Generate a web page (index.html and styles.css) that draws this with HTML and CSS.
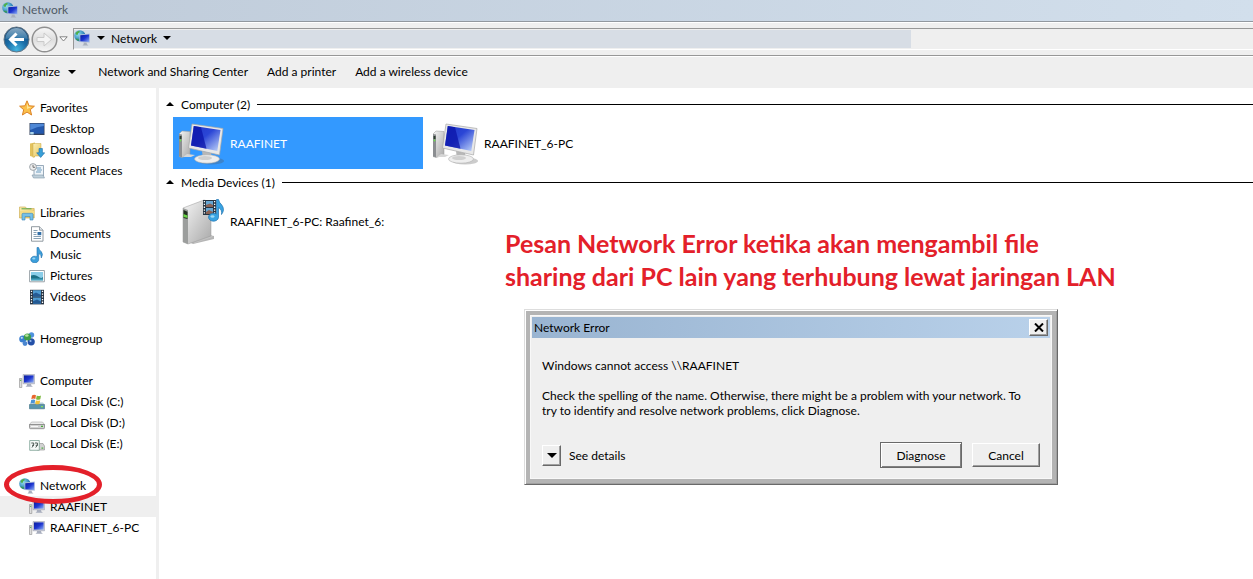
FILE: index.html
```
<!DOCTYPE html>
<html lang="en">
<head>
  <meta charset="utf-8">
  <title>Network</title>
  <link rel="stylesheet" href="styles.css">
</head>
<body>
  <!-- shared icons -->
  <svg class="defs" width="0" height="0">
    <defs>
      <linearGradient id="screen" x1="0" y1="0" x2="1" y2="1">
        <stop offset="0" stop-color="#0a1e9c"/><stop offset=".5" stop-color="#1d35d0"/><stop offset="1" stop-color="#8fb0f4"/>
      </linearGradient>
      <linearGradient id="screenBig" x1="0" y1="0" x2="1" y2="1">
        <stop offset="0" stop-color="#2036c8"/><stop offset=".45" stop-color="#2b46d6"/><stop offset="1" stop-color="#c4d8fa"/>
      </linearGradient>
      <linearGradient id="metal" x1="0" y1="0" x2="1" y2="1">
        <stop offset="0" stop-color="#f6f6f6"/><stop offset=".5" stop-color="#cfcfcf"/><stop offset="1" stop-color="#a9a9a9"/>
      </linearGradient>
      <radialGradient id="globe" cx=".35" cy=".35" r=".7">
        <stop offset="0" stop-color="#8fe0f0"/><stop offset="1" stop-color="#1467a8"/>
      </radialGradient>
      <linearGradient id="folder" x1="0" y1="0" x2="1" y2="1">
        <stop offset="0" stop-color="#fbeeb0"/><stop offset="1" stop-color="#e5c45e"/>
      </linearGradient>
      <radialGradient id="backFill" cx=".5" cy=".9" r=".8">
        <stop offset="0" stop-color="#45b5e0"/><stop offset=".5" stop-color="#1a6ea8"/><stop offset="1" stop-color="#174a78"/>
      </radialGradient>
      <linearGradient id="gloss" x1="0" y1="0" x2="0" y2="1">
        <stop offset="0" stop-color="#c4dbea"/><stop offset="1" stop-color="#4787b3"/>
      </linearGradient>
      <linearGradient id="fwdFill" x1="0" y1="0" x2="0" y2="1">
        <stop offset="0" stop-color="#f8f8f8"/><stop offset=".5" stop-color="#dedede"/><stop offset="1" stop-color="#f6f6f6"/>
      </linearGradient>
    </defs>

    <symbol id="i-network" viewBox="0 0 16 16">
      <circle cx="5.8" cy="5.800" r="5.600" fill="url(#globe)"/>
      <path d="M1.500 3Q3 1 5 .8L6 2 4.200 3.200 3.500 5 2 4.500z" fill="#4fae4a"/>
      <path d="M2 8.500l2.500.5.5 1.800Q3 11 1.500 9z" fill="#3c9c52"/>
      <path d="M5.500 4.500L15.800 3.600V12.800L5.500 12z" fill="#b6c3da"/>
      <path d="M6.300 5.200L15.200 4.400V12L6.300 11.200z" fill="url(#screen)"/>
      <path d="M9.500 12.500h3l.5 1.700 1.500 1.200H8.500L9.800 14z" fill="#a8afbd"/>
    </symbol>
    <symbol id="i-pc" viewBox="0 0 16 16">
      <path d="M.5 5.500h2.300v9H.5z" fill="#dedede" stroke="#8c8c8c" stroke-width=".6"/>
      <path d="M1.200 6.800h1v1.200h-1z" fill="#49aa3c"/>
      <path d="M4 1.500h11.600v9.300H4z" fill="#c7cbd6" stroke="#989daf" stroke-width=".5"/>
      <path d="M5 2.400h9.600v7.200H5z" fill="url(#screen)"/>
      <path d="M8 11h4l.5 1.800 1.500 1H6.500l1.200-1z" fill="#a7adbd"/>
    </symbol>
    <symbol id="i-star" viewBox="0 0 16 16">
      <path d="M8 .8l2.100 5 5.300.4-4.100 3.500 1.300 5.300L8 12.100 3.400 15l1.300-5.300L.6 6.200l5.300-.4z" fill="#fbc04a" stroke="#dd8428" stroke-width="1" stroke-linejoin="round"/>
      <path d="M8 3l1.300 3.700 3.400.3L8 9z" fill="#fee69a"/>
    </symbol>
    <symbol id="i-desktop" viewBox="0 0 16 16">
      <path d="M.5 2h15v12H.5z" fill="#35435c"/>
      <path d="M1.200 2.700h13.600v10H1.200z" fill="#2459ae"/>
      <path d="M1.200 2.700h13.600V5Q8 5.500 1.200 9z" fill="#4f88d6"/>
      <path d="M1.200 11h3.500v2.500H1.200z" fill="#a9d2e8"/>
    </symbol>
    <symbol id="i-downloads" viewBox="0 0 16 16">
      <path d="M1 1.500l5-1v15l-5-1.500z" fill="#e2c25d"/>
      <path d="M4 1.500h8v12.500H6L4 15.500z" fill="url(#folder)" stroke="#c9a645" stroke-width=".5"/>
      <path d="M10 6.500h3.400v4.300h2.300l-4 4.700-4-4.700H10z" fill="#38a0d8" stroke="#1b6da8" stroke-width=".6"/>
    </symbol>
    <symbol id="i-recent" viewBox="0 0 16 16">
      <path d="M5 2.500h9.500V13H5z" fill="#eef4f9" stroke="#8197a9" stroke-width=".8"/>
      <path d="M7 5h5M8 7h5M7 9h5" stroke="#6c9cbe"/>
      <path d="M3 12h11l1.500 3H4.500z" fill="#bfd0db" stroke="#8197a9" stroke-width=".6"/>
      <circle cx="4" cy="4" r="3.400" fill="#eee" stroke="#8b949a" stroke-width=".8"/>
      <path d="M4 2v2.300h2" fill="none" stroke="#555" stroke-width=".8"/>
    </symbol>
    <symbol id="i-libraries" viewBox="0 0 16 16">
      <path d="M.5 2h6l1 1.500h7.700V13H.5z" fill="url(#folder)" stroke="#c9a645" stroke-width=".6"/>
      <path d="M2.500 3.800h10" stroke="#58a550" stroke-width="1"/>
      <path d="M1 6h14.500v3H1z" fill="#f5dd85"/>
      <path d="M3 15V9.500Q3 8.300 4.200 8.300h8.600q1.200 0 1.200 1.200V15h-3v-3.500H6V15z" fill="#74c0e8" stroke="#3a84b5" stroke-width=".6"/>
    </symbol>
    <symbol id="i-documents" viewBox="0 0 16 16">
      <path d="M2.500.7h8l3.500 3.500v11H2.500z" fill="#fff" stroke="#868e96" stroke-width=".9"/>
      <path d="M10.500.7v3.500H14" fill="#dfe5ea" stroke="#868e96" stroke-width=".8"/>
      <path d="M4.500 4.500h4M4.500 6.500h3M4.500 8.500h3M4.500 10.500h7.500M4.500 12.500h7.500" stroke="#7b96ac" stroke-width=".9"/>
      <path d="M8.500 6h3.800v3.200H8.500z" fill="#316ea7"/>
    </symbol>
    <symbol id="i-music" viewBox="0 0 16 16">
      <path d="M8 .5h1.600Q10 3 12.300 4.700 14.500 7 12.300 11q.4-3.600-2.600-4.400v5.600A4 3.300 0 1 1 8 9.800z" fill="#3b9fdb" stroke="#1c6dab" stroke-width=".6"/>
      <ellipse cx="4.800" cy="11.500" rx="1.600" ry="1" fill="#9bd4f2"/>
    </symbol>
    <symbol id="i-pictures" viewBox="0 0 16 16">
      <path d="M.6 2.500h14.800v11.300H.6z" fill="#fff" stroke="#8f989f" stroke-width=".9"/>
      <path d="M2 4h12v8.300H2z" fill="#8acde8"/>
      <path d="M2 7.500Q6 6 9 8.500T14 9v3.300H2z" fill="#1c6f85"/>
      <path d="M2 10.500h12v1.800H2z" fill="#45a0bd"/>
    </symbol>
    <symbol id="i-videos" viewBox="0 0 16 16">
      <path d="M1 .8h14v14.600H1z" fill="#273443"/>
      <path d="M4 1.300h8v6.300H4zM4 8.500h8v6.300H4z" fill="#4d9ad1"/>
      <path d="M4 5l3-1.500L12 6v1.600H4zM4 12.200l4-1.700 4 2v2.300H4z" fill="#245a94"/>
      <path d="M2.500 1.800v13M13.500 1.800v13" stroke="#fff" stroke-width="1.300" stroke-dasharray="1.300 1.400"/>
    </symbol>
    <symbol id="i-homegroup" viewBox="0 0 16 16">
      <circle cx="3.800" cy="8" r="3.600" fill="#3a7fd0"/>
      <circle cx="12.200" cy="10.800" r="3.600" fill="#2450a8"/>
      <circle cx="12.500" cy="4" r="2.700" fill="#4f92dd"/>
      <circle cx="6" cy="12.600" r="2.400" fill="#4a86d0"/>
      <circle cx="8.500" cy="6" r="3.600" fill="#3f9e48"/>
      <ellipse cx="7.800" cy="4.500" rx="1.800" ry="1.300" fill="#b9e39d"/>
      <circle cx="2.800" cy="6.800" r="1.100" fill="#b7ddf5"/>
      <circle cx="11.500" cy="10" r="1.100" fill="#94baea"/>
    </symbol>
    <symbol id="i-disk" viewBox="0 0 16 16">
      <path d="M2.500 7h11l2 2.500H.5z" fill="#ececec" stroke="#999" stroke-width=".5"/>
      <path d="M.5 9.500h15v3.200q0 1-1 1h-13q-1 0-1-1z" fill="#d2d2d2" stroke="#777" stroke-width=".7"/>
      <path d="M2 11.500h7" stroke="#f7f7f7"/>
      <path d="M12 10.800h2v1.300h-2z" fill="#49aa3c"/>
    </symbol>
    <symbol id="i-disk-win" viewBox="0 0 16 16">
      <path d="M2 8.500h12l1.500 2H.5z" fill="#b8cfda"/>
      <path d="M.5 10.500h15v4.300H.5z" fill="#5794ad" stroke="#3d6e83" stroke-width=".6"/>
      <path d="M12 12h2v1.300h-2z" fill="#8be05a"/>
      <path d="M3 1.500Q5 0 7 1.200L6.300 5Q4.500 4 2.300 5.200z" fill="#e8662e"/>
      <path d="M7.800 1.500Q10 2.600 12 1.400L11.300 5.200Q9 6.200 7 5.200z" fill="#7dba3f"/>
      <path d="M2.200 6Q4.400 4.800 6.200 6L5.500 9.600Q3.500 8.500 1.500 9.600z" fill="#4a93d6"/>
      <path d="M6.900 6.200Q9 7.300 11.200 6.200L10.500 9.800Q8.300 10.800 6.200 9.800z" fill="#f3c237"/>
    </symbol>
    <symbol id="i-disk-share" viewBox="0 0 16 16">
      <path d="M8 7.500h6l1.500 2.500v4H8z" fill="#d2d2d2" stroke="#8b8b8b" stroke-width=".6"/>
      <path d="M.7 4.500h9.600v9.800H.7z" fill="#f6faf8" stroke="#7ba093" stroke-width=".8"/>
      <path d="M2.300 7h2.400v2L3 11.500M6 7h2.400v2L6.700 11.500M3 9.300h2M6.700 9.300h2" fill="none" stroke="#4c5a55" stroke-width="1"/>
      <path d="M12.500 11.500h1.800v1.200h-1.800z" fill="#49aa3c"/>
    </symbol>
    <symbol id="i-pc-big" viewBox="0 0 48 48">
      <ellipse cx="32" cy="42" rx="13" ry="3.500" fill="#555" opacity=".3"/>
      <path d="M0 15l3-3 8 .5V36l-8 2.500-3-1z" fill="url(#metal)" stroke="#999" stroke-width=".5"/>
      <path d="M0 15l3 .5V38.300L0 37.500z" fill="#8b8e91"/>
      <path d="M.6 17h1.900v3H.6z" fill="#2d3c2f"/>
      <circle cx="1.500" cy="21.500" r=".9" fill="#69df4c"/>
      <path d="M8 35l8 1-4 2H4z" fill="#d6d6d6"/>
      <path d="M23 32l9 2 1 6h-9z" fill="#b7b7b7"/>
      <ellipse cx="28" cy="40" rx="12.500" ry="4.200" fill="#eee" stroke="#adadad" stroke-width=".6"/>
      <ellipse cx="26" cy="39" rx="7" ry="2" fill="#cfcfcf"/>
      <path d="M13 5L44 9.500 40.500 36 9.500 29z" fill="#e8e8e8" stroke="#a8a8a8" stroke-width=".7"/>
      <path d="M14.800 7L41.500 11 38.300 32 12 26.500z" fill="url(#screenBig)"/>
      <path d="M14.800 7L22 8.200 27.500 29.800 12 26.500z" fill="#0b14a8" opacity=".75"/>
    </symbol>
    <symbol id="i-media" viewBox="0 0 48 48">
      <path d="M10 45l20-7 5 1v3L14 47z" fill="#6c6c6c" opacity=".5"/>
      <path d="M12 44l20-6 2 2-18 6z" fill="#c2c2c2"/>
      <path d="M4 11L25 3l7 2v34L9 47l-5-2z" fill="url(#metal)" stroke="#999" stroke-width=".5"/>
      <path d="M4 11l5 2v34l-5-2z" fill="#9c9e9d"/>
      <path d="M4.500 13l4 1.700V22l-4-1z" fill="#21301f"/>
      <path d="M4.500 17l4 1.500v2.500l-4-1z" fill="#6ad447"/>
      <path d="M24 3h13v15H24z" fill="#263442"/>
      <path d="M27 4h7v6h-7zM27 11h7v6h-7z" fill="#67a7d3"/>
      <path d="M27 8l4-1.500 3 1.500v2h-7zM27 15l3-2 4 2v2h-7z" fill="#8a6254"/>
      <path d="M25.400 4v13M35.600 4v13" stroke="#fff" stroke-width="1.300" stroke-dasharray="1.300 1.500"/>
      <path d="M37.500 2.500h2q.5 3 3.300 5.500 3.500 4.500-.3 9.500.8-5-3-7v10A5 4 0 1 1 37.500 17z" fill="#38a3e2" stroke="#1f72af" stroke-width=".7"/>
      <ellipse cx="33.500" cy="19.500" rx="2" ry="1.200" fill="#9ddaf6"/>
    </symbol>
    <symbol id="i-down" viewBox="0 0 8 4">
      <path d="M0 0h8L4 4z" fill="currentColor"/>
    </symbol>
    <symbol id="i-up" viewBox="0 0 8 4">
      <path d="M0 4h8L4 0z" fill="currentColor"/>
    </symbol>
  </svg>

  <div class="window">
    <header class="titlebar">
      <svg class="icon"><use href="#i-network"/></svg>
      <span>Network</span>
    </header>

    <div class="navbar">
      <div class="nav-buttons">
        <button class="nav-btn" aria-label="Back">
          <svg width="27" height="27" viewBox="0 0 27 27">
            <circle cx="13.500" cy="13.500" r="12.500" fill="url(#backFill)" stroke="#637584"/>
            <path d="M2.500 13A11 11 0 0 1 24.500 13Q13 10 2.500 13z" fill="url(#gloss)" opacity=".65"/>
            <path d="M21 13.500H8M13.500 7.500l-6 6 6 6" fill="none" stroke="#fff" stroke-width="3"/>
          </svg>
        </button>
        <button class="nav-btn" aria-label="Forward">
          <svg width="27" height="27" viewBox="0 0 27 27">
            <circle cx="13.500" cy="13.500" r="12.300" fill="url(#fwdFill)" stroke="#909090" stroke-width="1.500"/>
            <path d="M6 11.500h7V7l7.500 6.500L13 20v-4.500H6z" fill="#f4f4f4" stroke="#cacaca"/>
          </svg>
        </button>
        <button class="nav-btn history" aria-label="Recent pages">
          <svg width="9" height="6" viewBox="0 0 9 6"><path d="M.8.8h7.400L4.500 5z" fill="#fff" stroke="#777" stroke-width=".9"/></svg>
        </button>
      </div>
      <div class="address">
        <div class="address-path">
          <svg class="icon"><use href="#i-network"/></svg>
          <svg class="arrow"><use href="#i-down"/></svg>
          <a href="#">Network</a>
          <svg class="arrow"><use href="#i-down"/></svg>
        </div>
      </div>
    </div>

    <div class="toolbar">
      <button class="menu">Organize <svg class="arrow"><use href="#i-down"/></svg></button>
      <button>Network and Sharing Center</button>
      <button>Add a printer</button>
      <button>Add a wireless device</button>
    </div>

    <div class="body">
      <nav class="sidebar">
        <ul>
          <li><a href="#"><svg class="icon"><use href="#i-star"/></svg>Favorites</a></li>
          <li class="sub"><a href="#"><svg class="icon"><use href="#i-desktop"/></svg>Desktop</a></li>
          <li class="sub"><a href="#"><svg class="icon"><use href="#i-downloads"/></svg>Downloads</a></li>
          <li class="sub"><a href="#"><svg class="icon"><use href="#i-recent"/></svg>Recent Places</a></li>
        </ul>
        <ul>
          <li><a href="#"><svg class="icon"><use href="#i-libraries"/></svg>Libraries</a></li>
          <li class="sub"><a href="#"><svg class="icon"><use href="#i-documents"/></svg>Documents</a></li>
          <li class="sub"><a href="#"><svg class="icon"><use href="#i-music"/></svg>Music</a></li>
          <li class="sub"><a href="#"><svg class="icon"><use href="#i-pictures"/></svg>Pictures</a></li>
          <li class="sub"><a href="#"><svg class="icon"><use href="#i-videos"/></svg>Videos</a></li>
        </ul>
        <ul>
          <li><a href="#"><svg class="icon"><use href="#i-homegroup"/></svg>Homegroup</a></li>
        </ul>
        <ul>
          <li><a href="#"><svg class="icon"><use href="#i-pc"/></svg>Computer</a></li>
          <li class="sub"><a href="#"><svg class="icon"><use href="#i-disk-win"/></svg>Local Disk (C:)</a></li>
          <li class="sub"><a href="#"><svg class="icon"><use href="#i-disk"/></svg>Local Disk (D:)</a></li>
          <li class="sub"><a href="#"><svg class="icon"><use href="#i-disk-share"/></svg>Local Disk (E:)</a></li>
        </ul>
        <ul>
          <li class="marked">
            <a href="#"><svg class="icon"><use href="#i-network"/></svg>Network</a>
            <span class="ring"></span>
          </li>
          <li class="sub current"><a href="#"><svg class="icon"><use href="#i-pc"/></svg>RAAFINET</a></li>
          <li class="sub"><a href="#"><svg class="icon"><use href="#i-pc"/></svg>RAAFINET_6-PC</a></li>
        </ul>
      </nav>

      <main class="content">
        <section>
          <h2 class="group"><svg class="arrow"><use href="#i-up"/></svg>Computer (2)</h2>
          <div class="items">
            <a href="#" class="item selected"><svg class="big"><use href="#i-pc-big"/></svg>RAAFINET</a>
            <a href="#" class="item"><svg class="big"><use href="#i-pc-big"/></svg>RAAFINET_6-PC</a>
          </div>
        </section>
        <section>
          <h2 class="group"><svg class="arrow"><use href="#i-up"/></svg>Media Devices (1)</h2>
          <div class="items">
            <a href="#" class="item"><svg class="big"><use href="#i-media"/></svg>RAAFINET_6-PC: Raafinet_6:</a>
          </div>
        </section>
      </main>
    </div>

    <p class="note">Pesan Network Error ketika akan mengambil file<br>sharing dari PC lain yang terhubung lewat jaringan LAN</p>

    <div class="dialog" role="dialog" aria-labelledby="dialogTitle">
      <div class="dialog-inner">
        <div class="dialog-title">
          <span id="dialogTitle">Network Error</span>
          <button class="btn close" aria-label="Close">
            <svg width="10" height="9" viewBox="0 0 10 9"><path d="M1 .5l8 8M9 .5l-8 8" stroke="#000" stroke-width="2"/></svg>
          </button>
        </div>
        <div class="dialog-body">
          <p>Windows cannot access \\RAAFINET</p>
          <p>Check the spelling of the name. Otherwise, there might be a problem with your network. To<br>try to identify and resolve network problems, click Diagnose.</p>
          <div class="dialog-actions">
            <button class="btn details" id="details" aria-label="See details"><svg class="arrow"><use href="#i-down"/></svg></button>
            <label for="details">See details</label>
            <button class="btn default">Diagnose</button>
            <button class="btn cancel">Cancel</button>
          </div>
        </div>
      </div>
    </div>
  </div>
</body>
</html>
```
FILE: styles.css
```
* {
  box-sizing: border-box;
}
body {
  margin: 0;
  font-family: Lato, "Open Sans", sans-serif;
  font-size: 12px;
  color: #000;
  background-color: #fff;
}
a {
  color: inherit;
  text-decoration: none;
}
button {
  font: inherit;
  color: inherit;
  padding: 0;
  border: none;
  background: none;
}
svg {
  display: block;
  flex: none;
}
.defs {
  position: absolute;
}
.icon {
  width: 16px;
  height: 16px;
}
.arrow {
  width: 8px;
  height: 4px;
}
.window {
  position: relative;
  display: flex;
  flex-direction: column;
  min-height: 100vh;
}

/* title and address bars */
.titlebar {
  display: flex;
  align-items: center;
  gap: 4px;
  height: 22px;
  padding: 0 2px 2px;
  color: #4f5a66;
  background: linear-gradient(to right, #bfcbd9, #d2dfec);
  border-bottom: 1px solid #92989f;
}
.navbar {
  display: flex;
  align-items: center;
  height: 34px;
  background-color: #efefef;
  border-top: 1px solid #fff;
  border-bottom: 1px solid #979797;
}
.nav-buttons {
  display: flex;
  align-items: center;
  gap: 1px;
  width: 73px;
  padding-left: 3px;
}
.address {
  flex: 1;
  height: 22px;
  border-top: 1px solid #979797;
  border-left: 1px solid #979797;
  border-bottom: 1px solid #fff;
  padding: 1px 0;
}
.address-path {
  display: flex;
  align-items: center;
  gap: 6px;
  width: 71%;
  height: 18px;
  padding-bottom: 2px;
  background-color: #d7dde5;
}
.address-path .icon {
  margin-right: 1px;
}
.toolbar {
  display: flex;
  align-items: center;
  gap: 19px;
  height: 32px;
  padding: 0 13px 2px;
  background-color: #efefef;
  border-top: 1px solid #fff;
}
.toolbar button {
  display: flex;
  align-items: center;
  gap: 8px;
}
.toolbar .menu {
  padding-right: 3px;
}

/* folder tree */
.body {
  display: flex;
  flex: 1;
}
.sidebar {
  width: 159px;
  padding-top: 9px;
  border-right: 3px solid #efefef;
}
.sidebar ul {
  list-style: none;
  margin: 0 0 21px;
  padding: 0;
}
.sidebar ul:last-child {
  margin-bottom: 0;
}
.sidebar a {
  display: flex;
  align-items: center;
  gap: 5px;
  height: 21px;
  padding-left: 19px;
}
.sidebar .sub a {
  padding-left: 29px;
}
.sidebar .current {
  background-color: #efefef;
}
.marked {
  position: relative;
}
.ring {
  position: absolute;
  top: -10px;
  left: 4px;
  width: 98px;
  height: 39px;
  border: 5px solid #e3202a;
  border-radius: 50%;
  pointer-events: none;
}

/* file list */
.content {
  flex: 1;
  padding-top: 3px;
}
.group {
  display: flex;
  align-items: center;
  gap: 7px;
  height: 26px;
  margin: 0;
  padding-left: 7px;
  font-size: 12px;
  font-weight: normal;
}
.group::after {
  content: "";
  flex: 1;
  height: 1px;
  background-color: #000;
}
.items {
  display: flex;
  flex-wrap: wrap;
  gap: 4px;
  padding-left: 14px;
}
.item {
  display: flex;
  align-items: center;
  gap: 3px;
  width: 250px;
  height: 52px;
  padding-left: 6px;
}
.item.selected {
  color: #fff;
  background-color: #3399ff;
}
.big {
  width: 48px;
  height: 48px;
}

/* red caption laid over the window */
.note {
  position: absolute;
  top: 227px;
  left: 505px;
  margin: 0;
  font-size: 25px;
  font-weight: bold;
  line-height: 33px;
  color: #e3202a;
  white-space: nowrap;
}

/* error dialog */
.dialog {
  position: absolute;
  top: 309px;
  left: 524px;
  width: 534px;
  padding: 5px;
  background-color: #b4b4b4;
  border: 1px solid #ddd;
  border-right-color: #696969;
  border-bottom-color: #696969;
  box-shadow: inset 1px 1px #fff, inset -1px -1px #a0a0a0;
}
.dialog-inner {
  padding: 1px;
  background-color: #efefef;
  border: 1px solid #f8f8f8;
}
.dialog-title {
  display: flex;
  align-items: center;
  justify-content: space-between;
  height: 21px;
  padding: 0 2px;
  background: linear-gradient(to right, #99b4d1, #b9d1ea);
}
.dialog-body {
  padding: 20px 10px 9px;
  line-height: 15px;
}
.dialog-body p {
  margin: 0 0 15px;
  white-space: nowrap;
}
.dialog-actions {
  display: flex;
  align-items: center;
  gap: 8px;
  padding-top: 9px;
}
.dialog-actions label {
  flex: 1;
}
.btn {
  display: flex;
  align-items: center;
  justify-content: center;
  width: 68px;
  height: 24px;
  background-color: #efefef;
  border: 1px solid #fff;
  border-right-color: #696969;
  border-bottom-color: #696969;
  box-shadow: inset -1px -1px #a0a0a0;
}
.btn.default {
  width: 82px;
  height: 26px;
  border-color: #696969;
  box-shadow: inset 1px 1px #fff, inset -1px -1px #808080;
}
.btn.cancel {
  margin-left: 2px;
}
.btn.close {
  width: 19px;
  height: 17px;
}
.btn.details {
  width: 19px;
  height: 21px;
}
.btn.details .arrow {
  width: 10px;
  height: 5px;
}
```
